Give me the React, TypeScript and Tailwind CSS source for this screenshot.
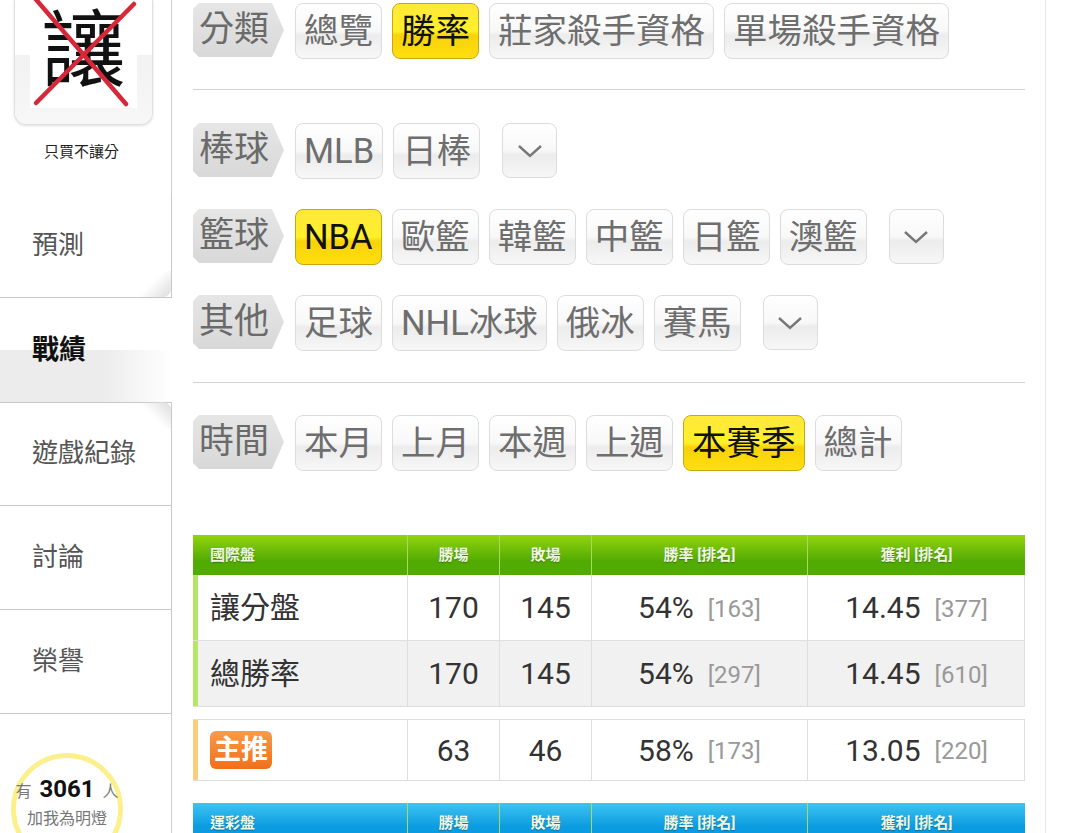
import React from 'react';

const font = { fontFamily: 'Roboto, "Noto Sans CJK TC", sans-serif' };

// 灰色按鈕 / 黃色選中按鈕
const Pill = ({ label, active }: { label: string; active?: boolean }) => (
  <div
    className={
      active
        ? 'flex h-[56px] items-center rounded-lg border border-[#c9a80f] bg-[linear-gradient(#ffe83a_0%,#fff02a_50%,#f8d20a_58%,#ffdf10_100%)] px-[8px] text-[34.5px] leading-none text-[#111]'
        : 'flex h-[56px] items-center rounded-lg border border-[#dcdcdc] bg-[linear-gradient(#ffffff_0%,#f8f8f8_50%,#ececec_58%,#f7f7f7_100%)] px-[8px] text-[34.5px] leading-none text-[#6e6e6e]'
    }
  >
    {label}
  </div>
);

const Tag = ({ label }: { label: string }) => (
  <div className="mr-[1px] flex h-[54px] w-[91px] items-center bg-[linear-gradient(#e6e6e6,#d8d8d8)] pb-[2px] pl-[6px] text-[35px] leading-none text-[#6a6a6a] [clip-path:polygon(6px_0,79px_0,91px_27px,79px_54px,6px_54px,0_48px,0_6px)]">
    {label}
  </div>
);

const More = () => (
  <div className="ml-[12px] flex h-[55px] w-[55px] items-center justify-center rounded-lg border border-[#dcdcdc] bg-[linear-gradient(#ffffff_0%,#f8f8f8_50%,#ececec_58%,#f7f7f7_100%)]">
    <svg width="26" height="16" viewBox="0 0 26 16" fill="none" stroke="#777" strokeWidth="2.4">
      <path d="M2 3l11 10L24 3" />
    </svg>
  </div>
);

const Row = ({ tag, items, active, more }: { tag: string; items: string[]; active?: string; more?: boolean }) => (
  <div className="flex items-start gap-[10px]">
    <Tag label={tag} />
    {items.map((i) => (
      <Pill key={i} label={i} active={i === active} />
    ))}
    {more && <More />}
  </div>
);

const cols = 'grid grid-cols-[215px_92px_92px_216px_217px]';

const TableHead = ({ title, blue }: { title: string; blue?: boolean }) => (
  <div
    className={`${cols} h-[40px] items-stretch text-[15px] font-bold text-[#eef7e2] [text-shadow:0_1px_1px_rgba(0,0,0,0.3)] ${
      blue
        ? 'bg-[linear-gradient(#3fc4f2,#0a9be0_60%)]'
        : 'bg-[linear-gradient(#93d40e,#52ab02_65%)]'
    }`}
  >
    <div className="flex items-center border-r border-[#a5dc5c] pl-[17px]">{title}</div>
    <div className="flex items-center justify-center border-r border-[#a5dc5c]">勝場</div>
    <div className="flex items-center justify-center border-r border-[#a5dc5c]">敗場</div>
    <div className="flex items-center justify-center border-r border-[#a5dc5c]">勝率 [排名]</div>
    <div className="flex items-center justify-center">獲利 [排名]</div>
  </div>
);

const Cell = ({ value, rank, last }: { value: string; rank: string; last?: boolean }) => (
  <div className={`flex items-center justify-center gap-[14px] ${last ? '' : 'border-r border-[#dedede]'}`}>
    <span className="text-[30px] text-[#333]">{value}</span>
    <span className="pt-[2px] text-[24px] text-[#999]">{rank}</span>
  </div>
);

const DataRow = ({
  label,
  win,
  lose,
  pct,
  pctRank,
  profit,
  profitRank,
  tint,
  barClass,
  h,
}: {
  label: React.ReactNode;
  win: string;
  lose: string;
  pct: string;
  pctRank: string;
  profit: string;
  profitRank: string;
  tint?: boolean;
  barClass: string;
  h: string;
}) => (
  <div className={`${cols} ${h} border-b border-r border-[#dedede] ${tint ? 'bg-[#f1f1f1]' : 'bg-white'}`}>
    <div className={`flex items-center border-r border-[#dedede] pl-[12px] text-[30px] text-[#333] border-l-[5px] ${barClass}`}>
      {label}
    </div>
    <div className="flex items-center justify-center border-r border-[#dedede] text-[30px] text-[#333]">{win}</div>
    <div className="flex items-center justify-center border-r border-[#dedede] text-[30px] text-[#333]">{lose}</div>
    <Cell value={pct} rank={pctRank} />
    <Cell value={profit} rank={profitRank} last />
  </div>
);

const NavItem = ({ label, below, above }: { label: string; below?: boolean; above?: boolean }) => (
  <div className="relative flex h-[104px] items-center border-b border-r border-[#c8c8c8] pl-[32px] text-[26px] text-[#555]">
    {label}
    {above && (
      <div className="absolute bottom-0 right-0 h-[26px] w-[40px] rounded-br-lg bg-[linear-gradient(135deg,rgba(255,255,255,0)_50%,#dcdcdc)]" />
    )}
    {below && (
      <div className="absolute right-0 top-0 h-[26px] w-[40px] rounded-tr-lg bg-[linear-gradient(45deg,rgba(255,255,255,0)_50%,#dcdcdc)]" />
    )}
  </div>
);

export default function App() {
  return (
    <div className="flex h-[833px] w-[1080px] overflow-hidden bg-white" style={font}>
      {/* 左側選單 */}
      <aside className="w-[172px] shrink-0">
        <div className="border-r border-[#d0d0d0] pl-[14px] pr-[18px]">
          <div className="relative h-[125px] w-[139px] overflow-hidden rounded-b-xl border border-t-0 border-[#e0e0e0] bg-[linear-gradient(#ffffff_0%,#ffffff_44%,#f2f2f2_44%,#f7f7f7_100%)] shadow-sm">
            <div className="mx-auto flex h-[108px] w-[107px] items-center justify-center bg-white pb-[4px] text-[84px] leading-none text-[#111]">
              讓
            </div>
            <svg className="absolute left-0 top-0" width="139" height="125" viewBox="0 0 139 125" fill="none" stroke="#d7283a" strokeWidth="4.5" strokeLinecap="round">
              <path d="M18 -4L111 104" />
              <path d="M119 4L21 103" />
            </svg>
          </div>
          <div className="flex h-[69px] items-start justify-center pt-[16px] pr-[4px] text-[15px] leading-[22px] text-[#222]">只買不讓分</div>
        </div>
        <NavItem label="預測" above />
        <div className="relative flex h-[104px] items-center bg-[linear-gradient(90deg,#ececec_0%,#ececec_60%,#ffffff_100%)] pl-[32px] text-[27px] font-bold text-[#111]">
          <div className="absolute inset-x-0 top-0 h-[52px] bg-white" />
          <span className="relative">戰績</span>
        </div>
        <div className="border-t border-[#c8c8c8]" />
        <div className="-mt-[1px]">
          <NavItem label="遊戲紀錄" below />
        </div>
        <NavItem label="討論" />
        <NavItem label="榮譽" />
        <div className="flex min-h-[119px] border-r border-[#d0d0d0] pl-[11px] pt-[39px]">
          <div className="flex h-[112px] w-[112px] shrink-0 flex-col items-center rounded-full border-[5px] border-[#fbf08c] pt-[16px]">
            <div className="flex items-baseline gap-[8px] whitespace-nowrap text-[16px] leading-[30px] text-[#777]">
              有<span className="text-[24px] font-bold text-[#111]">3061</span>人
            </div>
            <div className="whitespace-nowrap text-[16px] leading-[24px] text-[#777]">加我為明燈</div>
          </div>
        </div>
      </aside>

      {/* 主要內容 */}
      <main className="w-[874px] shrink-0 border-r border-[#e6e6e6] pl-[21px] pr-[20px] pt-[3px]">
        <Row tag="分類" items={['總覽', '勝率', '莊家殺手資格', '單場殺手資格']} active="勝率" />
        <div className="mt-[30px] h-px bg-[#d4d4d4]" />
        <div className="mt-[33px]">
          <Row tag="棒球" items={['MLB', '日棒']} more />
        </div>
        <div className="mt-[30px]">
          <Row tag="籃球" items={['NBA', '歐籃', '韓籃', '中籃', '日籃', '澳籃']} active="NBA" more />
        </div>
        <div className="mt-[30px]">
          <Row tag="其他" items={['足球', 'NHL冰球', '俄冰', '賽馬']} more />
        </div>
        <div className="mt-[31px] h-px bg-[#d4d4d4]" />
        <div className="mt-[32px]">
          <Row tag="時間" items={['本月', '上月', '本週', '上週', '本賽季', '總計']} active="本賽季" />
        </div>

        <div className="mt-[64px]">
          <TableHead title="國際盤" />
          <DataRow label="讓分盤" win="170" lose="145" pct="54%" pctRank="[163]" profit="14.45" profitRank="[377]" barClass="border-l-[#b7e566]" h="h-[66px]" />
          <DataRow label="總勝率" win="170" lose="145" pct="54%" pctRank="[297]" profit="14.45" profitRank="[610]" barClass="border-l-[#b7e566]" h="h-[66px]" tint />
        </div>
        <div className="mt-[12px] border-t border-[#dedede]">
          <DataRow
            label={
              <span className="flex h-[38px] w-[62px] items-center justify-center rounded-md bg-[linear-gradient(#fb9a45,#f0701c)] text-[27px] font-bold leading-none text-white">
                主推
              </span>
            }
            win="63"
            lose="46"
            pct="58%"
            pctRank="[173]"
            profit="13.05"
            profitRank="[220]"
            barClass="border-l-[#f9cd7c]"
            h="h-[61px]"
          />
        </div>
        <div className="mt-[22px]">
          <TableHead title="運彩盤" blue />
        </div>
      </main>
    </div>
  );
}
